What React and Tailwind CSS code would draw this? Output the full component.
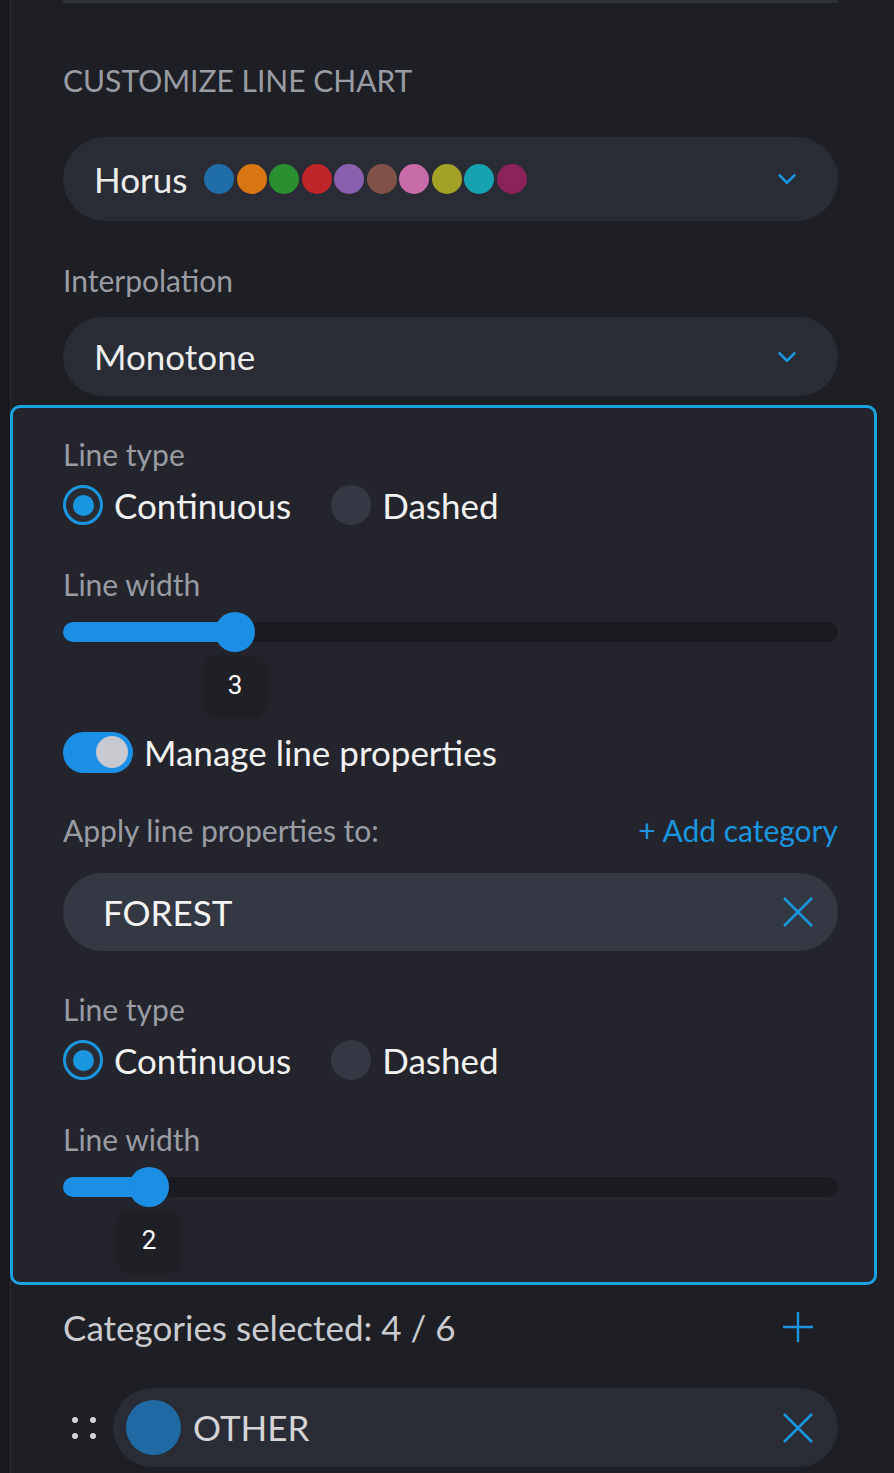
import { ChevronDown } from "lucide-react";

const palette = [
  "#1f6ea8",
  "#d97614",
  "#2a8f30",
  "#c0252a",
  "#8860ad",
  "#7f5147",
  "#c76ba9",
  "#a2a227",
  "#17a2b2",
  "#8b2458",
];

function XIcon() {
  return (
    <svg width="32" height="32" viewBox="0 0 32 32" fill="none">
      <path d="M2 2L30 30M30 2L2 30" stroke="#1a96e0" strokeWidth="2.6" />
    </svg>
  );
}

function PlusIcon() {
  return (
    <svg width="32" height="32" viewBox="0 0 32 32" fill="none">
      <path d="M16 1V31M1 16H31" stroke="#1a96e0" strokeWidth="2.4" />
    </svg>
  );
}

function Radio({ on }) {
  if (on) {
    return (
      <span className="w-[40px] h-[40px] shrink-0 rounded-full border-[3px] border-[#1a96e0] bg-[#2a2c34] flex items-center justify-center">
        <span className="w-[21px] h-[21px] rounded-full bg-[#1a96e0]"></span>
      </span>
    );
  }
  return <span className="block w-[40px] h-[40px] shrink-0 rounded-full bg-[#353843]"></span>;
}

function LineType({ top }) {
  return (
    <>
      <p className={`h-[40px] flex items-center text-[30px] text-[#9a9ca3] ${top}`}>Line type</p>
      <div className="mt-[9px] h-[44px] flex items-center">
        <Radio on />
        <span className="ml-[11px] text-[35px] text-[#f2f2f2]">Continuous</span>
        <span className="ml-[40px]">
          <Radio />
        </span>
        <span className="ml-[11px] text-[35px] text-[#f2f2f2]">Dashed</span>
      </div>
    </>
  );
}

function Thumbed({ fillW, thumbLeft, ml, n }) {
  return (
    <>
      <p className="mt-[37px] h-[40px] flex items-center text-[30px] text-[#9a9ca3]">Line width</p>
      <div className="mt-[8px] h-[40px] relative flex items-center">
        <div className="w-full h-[20px] rounded-full bg-[#1a1b20]"></div>
        <div className={`absolute left-0 top-[10px] h-[20px] rounded-l-full bg-[#1a8fe3] ${fillW}`}></div>
        <div className={`absolute top-0 w-[40px] h-[40px] rounded-full bg-[#1a8fe3] ${thumbLeft}`}></div>
      </div>
      <div
        className={`mt-[5px] w-[56px] h-[56px] flex items-center justify-center bg-[#1f2025] rounded-md shadow-[0_2px_10px_rgba(0,0,0,0.35)] text-[26px] text-white ${ml}`}
        style={{ fontFamily: "Roboto, sans-serif" }}
      >
        {n}
      </div>
    </>
  );
}

export default function App() {
  return (
    <main
      className="w-[894px] h-[1473px] flex bg-[#1e1f24] overflow-hidden"
      style={{ fontFamily: "Lato, 'Noto Sans', sans-serif" }}
    >
      <div className="w-[10px] h-full bg-[#19191d] shrink-0"></div>
      <section className="flex-1 flex flex-col border-l border-[#2c2d33] pl-[52px] pr-[56px]">
        <div className="h-[3px] bg-[#2f3139]"></div>

        <p className="mt-[57px] h-[40px] flex items-center text-[30px] text-[#9a9ca3]">
          CUSTOMIZE LINE CHART
        </p>

        <div className="mt-[37px] h-[84px] rounded-full bg-[#2a2c35] flex items-center pl-[31px] pr-[36px]">
          <span className="text-[35px] text-[#ececec]">Horus</span>
          <div className="ml-[17px] flex gap-[2.5px]">
            {palette.map((c) => (
              <span key={c} className="w-[30px] h-[30px] rounded-full" style={{ background: c }}></span>
            ))}
          </div>
          <ChevronDown className="ml-auto" size={30} color="#1a96e0" strokeWidth={2} />
        </div>

        <p className="mt-[39px] h-[40px] flex items-center text-[30px] text-[#9a9ca3]">Interpolation</p>

        <div className="mt-[17px] h-[79px] rounded-full bg-[#2a2c35] flex items-center pl-[31px] pr-[36px]">
          <span className="text-[35px] text-[#ececec]">Monotone</span>
          <ChevronDown className="ml-auto" size={30} color="#1a96e0" strokeWidth={2} />
        </div>

        <div className="mt-[9px] -ml-[53px] -mr-[39px] border-[3px] border-[#19a3e0] rounded-[10px] bg-[#24252c] pl-[50px] pr-[36px] pb-[14px] flex flex-col">
          <LineType top="mt-[26px]" />
          <Thumbed fillW="w-[175px]" thumbLeft="left-[152px]" ml="ml-[144px]" n="3" />

          <div className="mt-[19px] h-[40px] flex items-center">
            <span className="w-[70px] h-[41px] rounded-full bg-[#1a8fe3] flex items-center justify-end pr-[5px]">
              <span className="w-[32px] h-[32px] rounded-full bg-[#c9cacf]"></span>
            </span>
            <span className="ml-[11px] text-[35px] text-[#f2f2f2]">Manage line properties</span>
          </div>

          <div className="mt-[38px] h-[40px] flex items-center justify-between">
            <span className="text-[30px] text-[#9a9ca3]">Apply line properties to:</span>
            <span className="text-[30px] text-[#1a96e0]">+ Add category</span>
          </div>

          <div className="mt-[23px] h-[78px] rounded-full bg-[#343843] flex items-center pl-[40px] pr-[24px]">
            <span className="text-[35px] text-[#f4f4f4]">FOREST</span>
            <span className="ml-auto">
              <XIcon />
            </span>
          </div>

          <LineType top="mt-[38px]" />
          <Thumbed fillW="w-[90px]" thumbLeft="left-[66px]" ml="ml-[58px]" n="2" />
        </div>

        <div className="mt-[22px] h-[40px] flex items-center justify-between pr-[24px]">
          <span className="text-[35px] text-[#c9cbce]">Categories selected: 4 / 6</span>
          <PlusIcon />
        </div>

        <div className="mt-[41px] flex items-center">
          <div className="w-[50px] grid grid-cols-2 gap-[10px] pl-[9px] pr-[15px]">
            <span className="w-[6px] h-[6px] rounded-full bg-[#d2d2d2]"></span>
            <span className="w-[6px] h-[6px] rounded-full bg-[#d2d2d2]"></span>
            <span className="w-[6px] h-[6px] rounded-full bg-[#d2d2d2]"></span>
            <span className="w-[6px] h-[6px] rounded-full bg-[#d2d2d2]"></span>
          </div>
          <div className="flex-1 h-[79px] rounded-full bg-[#2a2c35] flex items-center pl-[13px] pr-[24px]">
            <span className="w-[55px] h-[55px] rounded-full bg-[#1f6aa5]"></span>
            <span className="ml-[12px] text-[35px] text-[#d4d4d6]">OTHER</span>
            <span className="ml-auto">
              <XIcon />
            </span>
          </div>
        </div>
      </section>
    </main>
  );
}
